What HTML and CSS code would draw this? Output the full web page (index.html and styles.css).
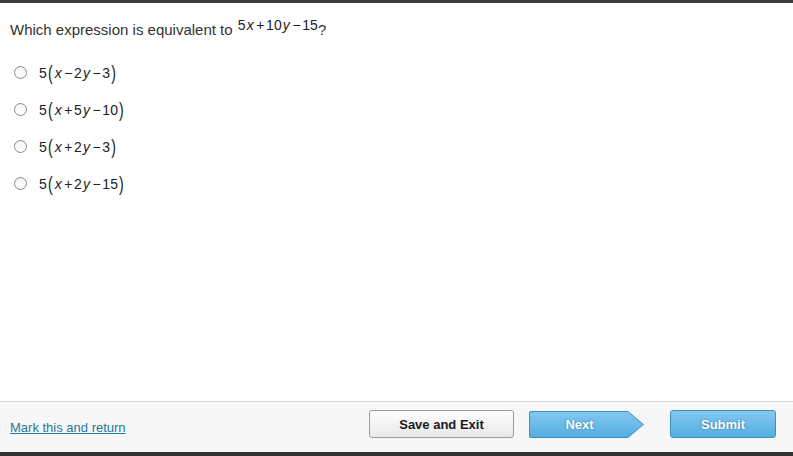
FILE: index.html
```html
<!DOCTYPE html>
<html>
<head>
<meta charset="utf-8">
<link rel="stylesheet" href="styles.css">
</head>
<body>
<div class="topbar"></div>
<main class="content">
  <p class="question">Which expression is equivalent to <span class="math raised">5<i>x</i><span class="op">+</span>10<i>y</i><span class="op">−</span>15</span>?</p>
  <ul class="options">
    <li class="option"><span class="radio"></span><span class="math">5<span class="paren">(</span><i>x</i><span class="op">−</span>2<i>y</i><span class="op">−</span>3<span class="paren">)</span></span></li>
    <li class="option"><span class="radio"></span><span class="math">5<span class="paren">(</span><i>x</i><span class="op">+</span>5<i>y</i><span class="op">−</span>10<span class="paren">)</span></span></li>
    <li class="option"><span class="radio"></span><span class="math">5<span class="paren">(</span><i>x</i><span class="op">+</span>2<i>y</i><span class="op">−</span>3<span class="paren">)</span></span></li>
    <li class="option"><span class="radio"></span><span class="math">5<span class="paren">(</span><i>x</i><span class="op">+</span>2<i>y</i><span class="op">−</span>15<span class="paren">)</span></span></li>
  </ul>
</main>
<footer class="footer">
  <a class="mark-link" href="#">Mark this and return</a>
  <div class="actions">
    <button class="btn btn-save">Save and Exit</button>
    <div class="btn-next"><div class="btn-next-inner">Next</div></div>
    <button class="btn btn-submit">Submit</button>
  </div>
</footer>
<div class="bottombar"></div>
</body>
</html>
```
FILE: styles.css
```css
html, body {
  margin: 0;
  padding: 0;
  background: #fff;
  font-family: "Liberation Sans", Arial, sans-serif;
  color: #333;
}
.topbar {
  height: 3px;
  background: #3c3c3c;
}
.content {
  height: 398px;
  box-sizing: border-box;
  padding: 15px 0 0 10px;
}
.question {
  margin: 0;
  font-size: 15px;
  line-height: 24px;
}
.math {
  font-size: 14px;
  color: #222;
  letter-spacing: 0.1px;
}
.math i {
  font-style: italic;
  padding: 0 1px;
}
.op {
  margin: 0 1.5px;
}
.raised {
  position: relative;
  top: -5px;
  margin-left: 1px;
}
.options {
  list-style: none;
  margin: 12px 0 0 0;
  padding: 0 0 0 4px;
}
.option {
  display: flex;
  align-items: center;
  height: 37px;
}
.radio {
  width: 11px;
  height: 11px;
  border: 1px solid #8a8a8a;
  border-radius: 50%;
  background: linear-gradient(#f4f4f4, #fff);
  margin-right: 12px;
  flex: none;
}
.paren {
  display: inline-block;
  transform: scaleY(1.45);
  margin: 0 1px;
}
.footer {
  box-sizing: border-box;
  border-top: 1px solid #d4d4d4;
  background: #f7f7f7;
  display: flex;
  align-items: flex-start;
  padding: 8px 17px 0 10px;
  height: 51px;
}
.mark-link {
  font-size: 13px;
  color: #1f7aa0;
  text-decoration: underline;
  margin-top: 10px;
}
.actions {
  margin-left: auto;
  display: flex;
  align-items: flex-start;
}
.btn {
  font-family: "Liberation Sans", Arial, sans-serif;
  font-weight: bold;
  font-size: 13px;
  height: 28px;
  border-radius: 3px;
  cursor: pointer;
  padding: 0;
}
.btn-save {
  width: 145px;
  border: 1px solid #9c9c9c;
  background: linear-gradient(#fdfdfd, #e9e9e9);
  color: #1a1a1a;
  margin-right: 15px;
}
.btn-next {
  width: 115px;
  height: 27px;
  margin-top: 1px;
  background: #3d8ec4;
  clip-path: polygon(0 0, 99px 0, 115px 50%, 99px 100%, 0 100%);
  border-radius: 2px;
  padding: 1px;
  box-sizing: border-box;
  margin-right: 26px;
}
.btn-next-inner {
  height: 100%;
  background: linear-gradient(#82c8f0, #55aee2);
  clip-path: polygon(0 0, 98px 0, 113px 50%, 98px 100%, 0 100%);
  color: #fff;
  font-weight: bold;
  font-size: 13px;
  text-shadow: 0 0 2px #2a6c99;
  display: flex;
  align-items: center;
  justify-content: center;
  padding-right: 14px;
  border-radius: 2px;
}
.btn-submit {
  width: 106px;
  border: 1px solid #3d8ec4;
  background: linear-gradient(#82c8f0, #55aee2);
  color: #fff;
  text-shadow: 0 0 2px #2a6c99;
}
.bottombar {
  height: 4px;
  background: #333;
}
```
